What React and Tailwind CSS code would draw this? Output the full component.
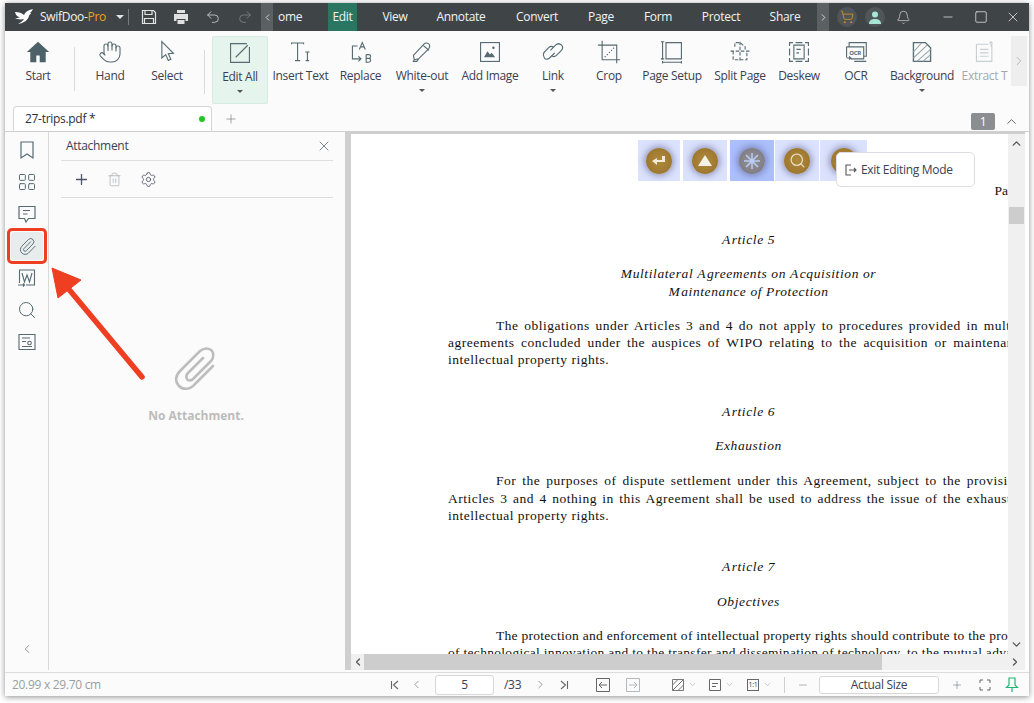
import React from 'react';
import { Bell, ChevronDown, ChevronLeft, ChevronRight, ChevronUp, Hand, LayoutGrid, Paperclip, Plus, Redo2, Search, Settings, ShoppingCart, Trash2, Undo2, X, Minus, Square } from 'lucide-react';

const ICON = '#566b72';

const Svg = ({ children, size = 24, className = '' }) => (
  <svg width={size} height={size} viewBox="0 0 28 28" fill="none" stroke={ICON} strokeWidth="1.300" className={className}>
    {children}
  </svg>
);

const ribbonIcons = {
  start: <Svg><path d="M14 2 1 14h4v12h7v-8h4v8h7V14h4z" fill="#4c6268" stroke="none" /></Svg>,
  hand: <Hand size={24} color={ICON} strokeWidth={1.1} />,
  select: <Svg><path d="M8 2v19l4.500-4 3 7 3-1.500-3-6.500 6-.5z" /></Svg>,
  editAll: <Svg><path d="M22 3H3v22h22V7" /><path d="m9 19 14-14" strokeWidth="1.400" /></Svg>,
  insert: <Svg><path d="M3 5V3.500h14V5M10 3.500V24M7 24h6M19 14h5M21.500 14v10M19.500 24h4" /></Svg>,
  replace: <Svg><path d="M12 11 15.500 3l3.500 8M13.500 8h4M10 7H4v15h10M11 19l3 3-3 3M20 17v9h3a2 2 0 0 0 0-4.500h-3M23 21.500a2 2 0 0 0 0-4.500h-3" /></Svg>,
  whiteout: <Svg><path d="m4 18 12-13c3-3 7-1 7 2 0 1-.5 2-1 3L10 22l-5 1zM5 23l-1 2h4l2-3M15 6l7 6" /></Svg>,
  image: <Svg><rect x="3" y="3" width="22" height="22" /><path d="m7 20 4-7 3 4 2-2 4 5z" fill={ICON} stroke="none" /><circle cx="18" cy="9" r="1.500" fill={ICON} stroke="none" /></Svg>,
  link: <Svg><path d="m11 12 6-6c2-2 5-2 7 0s1 5-1 7l-5 5c-2 2-4 2-6 0M16 15l-6 6c-2 2-5 2-6 0s-2-5 0-7l5-5c2-2 4-2 6 0" /></Svg>,
  crop: <Svg><path d="M6 1v22h21M1 6h22v21" /><path d="m9 20 11-11" strokeDasharray="1.500 2" /></Svg>,
  setup: <Svg><path d="M3 2v21M1 2h4M1 22h4M7 3h18v19H7zM3 26h22M3 24.500v3M25 24.500v3" /></Svg>,
  split: <Svg><path d="M8 8V3h6l6 5v3M6 13v10h16V13M14 2v24M3 13h22" strokeDasharray="4 2" /></Svg>,
  deskew: <Svg><path d="M3 7V3h4M21 3h4v4M25 21v4h-4M7 25H3v-4M10 3h8M10 25h8M3 10v8M25 10v8" /><path d="M8 6h12v16H8zM11 11h5M11 15h3" /></Svg>,
  ocr: <Svg><path d="M6 8V3h20v16h-3M3 8h20v14H8M3 8v12M3 21h5M6 19l2 2-2 2M12 25h14" /><text x="6" y="18" fontSize="7" fontWeight="700" fill={ICON} stroke="none" fontFamily="Noto Sans">OCR</text></Svg>,
  background: <Svg><path d="M4 3h14l6 6v16H4z" strokeWidth="1.600" /><path d="m4 14 9-10M4 21 20 6M8 25 24 11M15 25l9-8" stroke="#9aa8ab" /></Svg>,
  extract: <Svg><g stroke="#c8cfd1"><path d="M4 5h14M22 5v20H4V5M8 11h10M8 15h10M8 19h10M21 8V2m-2 2 2-2 2 2" /></g></Svg>,
};

// name, width class, caret
const ribbon = [
  { k: 'start', t: 'Start', w: 'w-[66px]' },
  { sep: 'mx-[3px] mt-[11px]' },
  { k: 'hand', t: 'Hand', w: 'w-[64px]' },
  { k: 'select', t: 'Select', w: 'w-[50px]' },
  { sep: 'ml-[12px] mr-[7px] mt-[14px]' },
  { k: 'editAll', t: 'Edit All', w: 'w-[56px]', caret: true, active: true },
  { k: 'insert', t: 'Insert Text', w: 'w-[65px]' },
  { k: 'replace', t: 'Replace', w: 'w-[55px]' },
  { k: 'whiteout', t: 'White-out', w: 'w-[68px]', caret: true },
  { k: 'image', t: 'Add Image', w: 'w-[68px]' },
  { k: 'link', t: 'Link', w: 'w-[58px]', caret: true },
  { k: 'crop', t: 'Crop', w: 'w-[54px]' },
  { k: 'setup', t: 'Page Setup', w: 'w-[72px]' },
  { k: 'split', t: 'Split Page', w: 'w-[64px]' },
  { k: 'deskew', t: 'Deskew', w: 'w-[54px]' },
  { k: 'ocr', t: 'OCR', w: 'w-[60px]' },
  { k: 'background', t: 'Background', w: 'w-[72px]', caret: true },
  { k: 'extract', t: 'Extract T', w: 'w-[53px]', dim: true },
];

const menu = [
  { t: 'View', w: 'w-[76px]' },
  { t: 'Annotate', w: 'w-[56px]' },
  { t: 'Convert', w: 'w-[96px]' },
  { t: 'Page', w: 'w-[32px]' },
  { t: 'Form', w: 'w-[82px]' },
  { t: 'Protect', w: 'w-[44px]' },
  { t: 'Share', w: 'w-[84px]' },
];

const TitleBar = () => (
  <div className="flex h-[28px] items-center whitespace-nowrap bg-[#3f4447] text-[12px] text-[#f2f4f4]">
    <svg width="20" height="16" viewBox="0 0 20 16" className="ml-[9px] shrink-0">
      <path d="M1 3c4 0 7 1 9 3 1-3 4-5 9-6-1 2-2 3-3 4 1 0 1 1 1 1-1 0-2 1-2 2-1 4-5 7-11 8 3-2 5-3 6-5-4 1-7 0-9-1 2 0 4 0 5-1-2 0-4-1-5-5z" fill="#fff" />
    </svg>
    <span className="ml-[6px] w-[67px] shrink-0 leading-none">SwifDoo-<span className="text-[#f0a020]">Pro</span></span>
    <div className="ml-[9px] h-0 w-0 shrink-0 border-x-[4px] border-t-[4px] border-x-transparent border-t-[#e4e4e4]" />
    <div className="ml-[4px] h-[16px] w-px shrink-0 bg-[#777c7f]" />
    <svg width="16" height="16" viewBox="0 0 16 16" fill="none" stroke="#e2e4e4" strokeWidth="1.200" className="ml-[12px] shrink-0">
      <path d="M1.500 1.500h11l2 2v11h-13zM4 1.500v4h7v-4M3.500 14.500v-5h9v5" />
    </svg>
    <svg width="16" height="16" viewBox="0 0 16 16" fill="#dfe1e1" className="ml-[16px] shrink-0">
      <path d="M4 1h8v3H4zM1 5h14v7h-2.500v-2h-9v2H1zM4.500 11h7v4h-7z" />
    </svg>
    <Undo2 size={16} color="#c9cccc" strokeWidth={1.3} className="ml-[16px] shrink-0" />
    <Redo2 size={16} color="#7b8083" strokeWidth={1.3} className="ml-[16px] shrink-0" />
    <div className="ml-[8px] flex h-full w-[12px] shrink-0 items-center justify-center bg-[#5b6063]">
      <ChevronLeft size={11} color="#d7d9d9" />
    </div>
    <span className="ml-[5px] w-[50px] shrink-0">ome</span>
    <div className="flex h-full w-[29px] shrink-0 items-center justify-center bg-[#2a7660]">Edit</div>
    {menu.map((m) => (
      <span key={m.t} className={`shrink-0 text-center ${m.w}`}>{m.t}</span>
    ))}
    <div className="-ml-[10px] flex h-full w-[12px] shrink-0 items-center justify-center bg-[#5b6063]">
      <ChevronRight size={11} color="#d7d9d9" />
    </div>
    <div className="ml-[8px] flex h-[20px] w-[20px] shrink-0 items-center justify-center rounded-full bg-[#505558]">
      <ShoppingCart size={14} color="#d9912a" strokeWidth={1.4} />
    </div>
    <div className="ml-[8px] flex h-[20px] w-[20px] shrink-0 items-center justify-center rounded-full bg-[#505558]">
      <svg width="12" height="13" viewBox="0 0 12 13" fill="#a8e6d4"><circle cx="6" cy="3.500" r="3" /><path d="M0 13c0-4 3-5 6-5s6 1 6 5z" /></svg>
    </div>
    <Bell size={15} color="#d7d9d9" strokeWidth={1.1} className="ml-[11px] shrink-0" />
    <Minus size={14} color="#f2f2f2" strokeWidth={1.2} className="ml-[30px] shrink-0" />
    <Square size={14} color="#f2f2f2" strokeWidth={1.2} className="ml-[19px] shrink-0" />
    <X size={16} color="#f2f2f2" strokeWidth={1.1} className="ml-[17px] shrink-0" />
  </div>
);

const Ribbon = () => (
  <div className="relative flex h-[73px] bg-[#fbfbfb] pt-[5px] text-[12px] text-[#3a4150]">
    {ribbon.map((r, i) =>
      r.sep ? (
        <div key={i} className={`h-[44px] w-px bg-[#d9dbdb] ${r.sep}`} />
      ) : (
        <div
          key={r.k}
          className={`flex h-[68px] shrink-0 flex-col items-center overflow-hidden whitespace-nowrap pt-[2px] ${r.w} ${r.active ? 'rounded-[2px] border border-[#d4ece2] bg-[#e6f4ee]' : ''}`}
        >
          <div className="flex h-[28px] shrink-0 items-center justify-center">{ribbonIcons[r.k]}</div>
          <span className={`mt-[1px] leading-[18px] ${r.dim ? 'text-[#a4a8ab]' : ''}`}>{r.t}</span>
          {r.caret && <div className="mt-[4px] h-0 w-0 border-x-[3px] border-t-[3px] border-x-transparent border-t-[#555]" />}
        </div>
      )
    )}
    <div className="flex h-[50px] w-[16px] shrink-0 items-center justify-center self-start bg-[#eeeeee]">
      <ChevronRight size={14} color="#a0a4a6" strokeWidth={1.3} />
    </div>
  </div>
);

const TabRow = () => (
  <div className="flex h-[27px] items-end bg-[#fbfbfb] pl-[8px]">
    <div className="flex h-[25px] w-[199px] items-center justify-between rounded-t-[4px] border border-b-0 border-[#d5d5d5] bg-white pl-[11px] pr-[6px] text-[12px] text-[#2b2f38]">
      <span>27-trips.pdf *</span>
      <div className="h-[6px] w-[6px] rounded-full bg-[#22c522]" />
    </div>
    <Plus size={14} color="#8a8f92" strokeWidth={1.4} className="mb-[5px] ml-[12px]" />
    <div className="mb-[1px] ml-[733px] flex h-[17px] w-[24px] items-center justify-center rounded-[2px] bg-[#8b8e91] text-[12px] text-white">1</div>
    <ChevronUp size={15} color="#4a4f55" strokeWidth={1.4} className="mb-[2px] ml-[9px]" />
  </div>
);

const railIcons = [
  <svg key="b" width="20" height="20" viewBox="0 0 20 20" fill="none" stroke={ICON} strokeWidth="1.200">
    <path d="M4 2h12v16l-6-4-6 4z" />
  </svg>,
  <LayoutGrid key="g" size={20} color={ICON} strokeWidth={1.2} />,
  <svg key="m" width="20" height="20" viewBox="0 0 20 20" fill="none" stroke={ICON} strokeWidth="1.200">
    <path d="M2 2.500h16v12h-6.500L9 18l-1.500-3.500H2zM6 6.500h7M6 10h4.500" />
  </svg>,
  <Paperclip key="p" size={19} color={ICON} strokeWidth={1.2} />,
  <svg key="w" width="20" height="20" viewBox="0 0 20 20" fill="none" stroke={ICON} strokeWidth="1.100">
    <path d="M2.500 15V2h15v15H9M1 17h6M6 15.500 7.500 17 6 18.500" />
    <path d="m5 5 2.500 9L10 7l2.500 7L15 5" />
  </svg>,
  <Search key="s" size={20} color={ICON} strokeWidth={1.2} />,
  <svg key="f" width="20" height="20" viewBox="0 0 20 20" fill="none" stroke={ICON} strokeWidth="1.100">
    <path d="M2 2.500h16v15H2zM5 6h8M5 9.500h4M5 14.500h10" />
    <circle cx="12.500" cy="11" r="1.800" />
  </svg>,
];

const Rail = () => (
  <div className="flex w-[44px] shrink-0 flex-col items-center border-r border-[#d9d9d9] bg-[#fbfbfb] pl-[1px] pt-[2px]">
    {railIcons.map((ic, i) => (
      <div key={i} className="relative flex h-[32px] w-[32px] items-center justify-center">
        {i === 3 && <div className="absolute inset-x-0 inset-y-[2px] rounded-[3px] bg-[#e9eced]" />}
        <div className="relative flex">{ic}</div>
        {i === 3 && <div className="absolute inset-x-[-4px] inset-y-[-2px] rounded-[5px] border-[3px] border-[#ee3f23]" />}
      </div>
    ))}
    <div className="mt-auto mb-[14px]">
      <ChevronLeft size={14} color="#70767a" strokeWidth={1.3} />
    </div>
  </div>
);

const AttachmentPanel = () => (
  <div className="flex w-[296px] shrink-0 flex-col bg-[#fbfbfb] px-[12px]">
    <div className="flex h-[29px] items-center justify-between border-b border-[#dedede] pl-[5px] text-[12px] text-[#3a4150]">
      <span>Attachment</span>
      <X size={16} color="#555b60" strokeWidth={1.1} className="mr-[1px]" />
    </div>
    <div className="flex h-[37px] items-center border-b border-[#dedede] pl-[12px]">
      <Plus size={17} color="#4a5568" strokeWidth={1.8} />
      <Trash2 size={15} color="#a8b0b4" strokeWidth={1.2} className="ml-[17px]" />
      <Settings size={17} color="#4a5568" strokeWidth={1.2} className="ml-[18px]" />
    </div>
    <div className="flex flex-col items-center pr-[2px] pt-[147px]">
      <svg width="48" height="48" viewBox="0 0 48 48" fill="none" stroke="#bdbdbd" strokeWidth="2.600" strokeLinecap="round">
        <path d="m41 21-18 18c-5 6-12 6-16 2s-4-10 1-15L28 6c4-3 8-3 11-1s3 8 0 11L21 34c-2 2-5 2-6 0s-1-4 1-6l15-15" />
      </svg>
      <span className="mt-[14px] text-[12px] font-bold tracking-normal text-[#bcbcbc]">No Attachment.</span>
    </div>
  </div>
);

const Ball = ({ children, grey }) => (
  <div className={`flex h-[26px] w-[26px] items-center justify-center rounded-full shadow-[0_0_6px_2px_rgba(80,80,130,0.5)] ${grey ? 'bg-[radial-gradient(circle,#96939a,#77757a)]' : 'bg-[radial-gradient(circle,#b08a3c,#96702a)]'}`}>
    {children}
  </div>
);

const navTiles = [
  { w: 'w-[42px] mr-[3px]', icon: <svg width="14" height="12" viewBox="0 0 14 12" fill="#f3ead8"><path d="M10 1h3v6H5v3L0 6l5-3v2h5z" /></svg> },
  { w: 'w-[44px] mr-[3px]', icon: <svg width="14" height="11" viewBox="0 0 14 11" fill="#f3f0e6"><path d="M7 0 14 11H0z" /></svg> },
  { w: 'w-[44px] mr-[1px]', active: true, icon: <svg width="18" height="18" viewBox="0 0 18 18" stroke="#b9cdf5" strokeWidth="1.500"><path d="M9 1v16M1 9h16M3 3l12 12M15 3 3 15" /></svg> },
  { w: 'w-[44px] mr-[1px]', icon: <Search size={17} color="#e9dcc2" strokeWidth={1.8} /> },
  { w: 'w-[47px]', icon: <div className="h-[12px] w-[12px] bg-[#f0efe8]" /> },
];

const Para = ({ lines }) => (
  <div className="whitespace-nowrap text-[13.500px] leading-[17.300px] text-[#111]">
    {lines.map(([t, cls], i) => (
      <div key={i} className={cls}>{t}</div>
    ))}
  </div>
);

const Head = ({ children, className = '' }) => (
  <div className={`ml-[-97px] w-[795px] text-center text-[13.500px] italic leading-[17.300px] tracking-[0.6px] text-[#111] ${className}`}>{children}</div>
);

const Wide = ({ children }) => <span className="tracking-[1.500px]">{children}</span>;

const Document = () => (
  <div className="relative min-w-0 flex-1 overflow-hidden bg-white pl-[97px] tracking-normal" style={{ fontFamily: '"Liberation Serif", serif' }}>
    <div className="absolute left-[287px] top-[6px] flex">
      {navTiles.map((n, i) => (
        <div key={i} className={`flex h-[41px] items-center justify-center ${n.w} ${n.active ? 'bg-[#abbffb]' : 'bg-[#dbe2fd]'}`}>
          <Ball grey={n.active}>{n.icon}</Ball>
        </div>
      ))}
    </div>
    <div className="absolute right-0 top-[47px] text-[13.500px] text-[#111]">Pa</div>
    <div className="h-[97px]" />
    <Head><Wide>A</Wide>rticle 5</Head>
    <Head className="mt-[17px]">Multilateral <Wide>A</Wide>greements on <Wide>A</Wide>cquisition or</Head>
    <Head><Wide>M</Wide>aintenance of Protection</Head>
    <div className="h-[17px]" />
    <Para lines={[
      ['The obligations under Articles 3 and 4 do not apply to procedures provided in multilateral', 'pl-[48px] tracking-[0.5px] [word-spacing:1.850px]'],
      ['agreements concluded under the auspices of WIPO relating to the acquisition or maintenance', 'tracking-[0.5px] [word-spacing:2.600px]'],
      ['intellectual property rights.', 'tracking-[0.5px]'],
    ]} />
    <div className="h-[34px]" />
    <Head><Wide>A</Wide>rticle 6</Head>
    <Head className="mt-[17px]">Exhaustion</Head>
    <div className="h-[18px]" />
    <Para lines={[
      ['For the purposes of dispute settlement under this Agreement, subject to the provisions', 'pl-[48px] tracking-[0.5px] [word-spacing:2.100px]'],
      ['Articles 3 and 4 nothing in this Agreement shall be used to address the issue of the exhaustion', 'tracking-[0.5px] [word-spacing:1.600px]'],
      ['intellectual property rights.', 'tracking-[0.5px]'],
    ]} />
    <div className="h-[34px]" />
    <Head><Wide>A</Wide>rticle 7</Head>
    <Head className="mt-[17px]">Objectives</Head>
    <div className="h-[17px]" />
    <Para lines={[
      ['The protection and enforcement of intellectual property rights should contribute to the promotion', 'pl-[48px] tracking-[0.28px]'],
      ['of technological innovation and to the transfer and dissemination of technology, to the mutual advantage', 'tracking-[0.3px]'],
    ]} />
  </div>
);

const VScroll = () => (
  <div className="flex w-[17px] shrink-0 flex-col items-center bg-[#f0f0f0]">
    <ChevronUp size={13} color="#555" strokeWidth={2.5} className="mt-[3px]" />
    <div className="mt-[57px] h-[17px] w-[15px] bg-[#cdcdcd]" />
    <ChevronDown size={13} color="#555" strokeWidth={2.5} className="mb-[3px] mt-auto" />
  </div>
);

const HScroll = () => (
  <div className="flex h-[16px] shrink-0 items-center bg-[#f0f0f0]">
    <div className="flex w-[13px] justify-center"><ChevronLeft size={12} color="#555" strokeWidth={2.5} /></div>
    <div className="h-full w-[518px] bg-[#cdcdcd]" />
    <div className="ml-auto flex w-[20px] justify-center"><ChevronRight size={12} color="#555" strokeWidth={2.5} /></div>
  </div>
);

const Caret = () => <ChevronDown size={9} color="#9aa0a3" strokeWidth={1.5} className="ml-[4px]" />;

const StatusBar = () => (
  <div className="flex h-[24px] items-center border-t border-[#dcdcdc] bg-[#fbfbfb] pl-[7px] text-[12px] text-[#3a4150]">
    <span className="w-[378px] text-[#9a9ea1]">20.99 x 29.70 cm</span>
    <svg width="10" height="10" viewBox="0 0 10 10" fill="none" stroke="#666" strokeWidth="1.100"><path d="M1.500 1v8M8 1 3.500 5 8 9" /></svg>
    <ChevronLeft size={13} color="#666" strokeWidth={1.2} className="ml-[10px]" />
    <div className="ml-[12px] flex h-[20px] w-[59px] items-center justify-center rounded-[3px] border border-[#d8d8d8] bg-white">5</div>
    <span className="ml-[10px] w-[26px]">/33</span>
    <ChevronRight size={13} color="#666" strokeWidth={1.2} className="ml-[4px]" />
    <svg width="10" height="10" viewBox="0 0 10 10" fill="none" stroke="#666" strokeWidth="1.100" className="ml-[12px]"><path d="M8.500 1v8M2 1l4.500 4L2 9" /></svg>
    <svg width="14" height="14" viewBox="0 0 14 14" fill="none" stroke="#666" strokeWidth="1" className="ml-[27px]"><path d="M.5.500h13v13H.5zM11 7H3M6 4 3 7l3 3" /></svg>
    <svg width="14" height="14" viewBox="0 0 14 14" fill="none" stroke="#b5b8ba" strokeWidth="1" className="ml-[16px]"><path d="M.5.500h13v13H.5zM3 7h8M8 4l3 3-3 3" /></svg>
    <svg width="12" height="12" viewBox="0 0 12 12" fill="none" stroke="#777" strokeWidth="1" className="ml-[32px]"><path d="M.5.500h11v11H.5zM.5 6 6 .5M.5 11.500l11-11M6 11.500 11.500 6" /></svg>
    <Caret />
    <svg width="12" height="12" viewBox="0 0 12 12" fill="none" stroke="#666" strokeWidth="1" className="ml-[12px]"><path d="M.5.500h11v11H.5zM3 4.500h6M3 7.500h4" /></svg>
    <Caret />
    <div className="ml-[13px] flex h-[12px] w-[12px] items-center justify-center border border-[#666] text-[7px] leading-none">1:1</div>
    <Caret />
    <div className="ml-[12px] h-[16px] w-px bg-[#cfcfcf]" />
    <Minus size={12} color="#9a9ea1" strokeWidth={1.5} className="ml-[12px]" />
    <div className="ml-[10px] flex h-[18px] w-[120px] items-center justify-center rounded-[3px] border border-[#d8d8d8] bg-white">Actual Size</div>
    <Plus size={12} color="#8a8f92" strokeWidth={1.5} className="ml-[12px]" />
    <svg width="12" height="12" viewBox="0 0 12 12" fill="none" stroke="#666" strokeWidth="1" className="ml-[16px]"><path d="M1 4V1h3M8 1h3v3M11 8v3H8M4 11H1V8" /></svg>
    <svg width="14" height="15" viewBox="0 0 14 15" fill="none" stroke="#1fb873" strokeWidth="1.200" className="ml-[14px]"><path d="M4 1h6v7l2.500 2.500h-11L4 8zM7 10.500V15" /></svg>
  </div>
);

export default function App() {
  return (
    <div className="relative h-[703px] w-[1034px] overflow-hidden bg-white tracking-[-0.3px]" style={{ fontFamily: '"Open Sans", "Noto Sans", sans-serif' }}>
      <div className="absolute left-[5px] top-[3px] flex h-[693px] w-[1024px] flex-col overflow-hidden shadow-[0_1px_6px_rgba(0,0,0,0.45)]">
        <TitleBar />
        <Ribbon />
        <TabRow />
        <div className="flex min-h-0 flex-1 border-t border-[#cfcfcf] bg-[#fbfbfb] pb-[2px]">
          <Rail />
          <AttachmentPanel />
          <div className="flex min-w-0 flex-1 flex-col border-l-[6px] border-t-[2px] border-[#cfcfcf]">
            <div className="flex min-h-0 flex-1">
              <Document />
              <VScroll />
            </div>
            <HScroll />
          </div>
          <div className="w-[4px] shrink-0 bg-white" />
        </div>
        <StatusBar />
      </div>

      {/* popover from the edit mode */}
      <div className="absolute left-[836px] top-[152px] flex h-[35px] w-[139px] items-center rounded-[5px] border border-[#dddde4] bg-white pl-[8px] text-[12px] text-[#3a4150]">
        <svg width="12" height="12" viewBox="0 0 12 12" fill="none" stroke="#555" strokeWidth="1.100"><path d="M6 1H1v10h5M4 6h7M9 4l2 2-2 2" /></svg>
        <span className="ml-[4px]">Exit Editing Mode</span>
      </div>

      {/* red annotation arrow */}
      <svg width="110" height="120" viewBox="0 0 110 120" className="absolute left-[45px] top-[262px]">
        <path d="M97 115 22 25" stroke="#ee3f23" strokeWidth="5.500" strokeLinecap="round" />
        <path d="M7 6 36 18 13 36 Z" fill="#ee3f23" stroke="#ee3f23" strokeWidth="1" strokeLinejoin="round" />
      </svg>
    </div>
  );
}
